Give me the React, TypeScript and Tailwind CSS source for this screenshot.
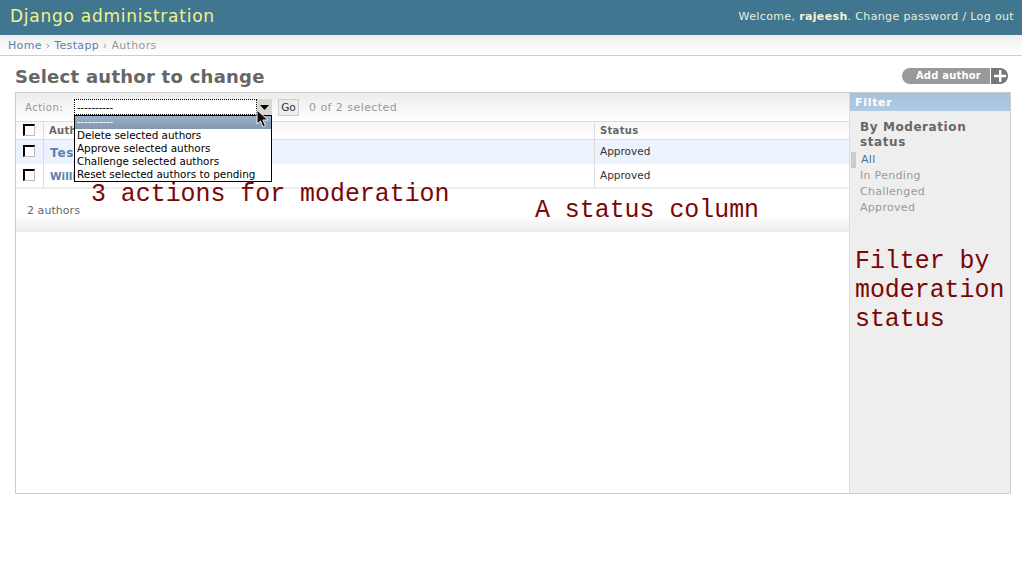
const sans = "font-['DejaVu_Sans',Verdana,sans-serif]"

function Check() {
  return <div className="w-[12px] h-[12px] bg-white border-t-2 border-l-2 border-t-black border-l-black border-r border-b border-r-[#bbb] border-b-[#bbb]" />
}

function Row({ name, className, nameSize }: { name: string; className: string; nameSize: string }) {
  return (
    <div className={`flex ${className}`}>
      <div className="w-[28px] pl-[7px] pt-[5px] border-r border-[#ddd]"><Check /></div>
      <div className={`w-[551px] pl-[6px] pt-[4px] border-r border-[#ddd] font-bold text-[#5b80b2] ${nameSize}`}>{name}</div>
      <div className="flex-1 pl-[5px] pt-[4px] text-[10.5px] text-[#333]">Approved</div>
    </div>
  )
}

function Note({ className, children }: { className: string; children: React.ReactNode }) {
  return <div className={`absolute font-['Liberation_Mono',monospace] text-[#7a0606] text-[24.9px] leading-[29px] whitespace-pre ${className}`}>{children}</div>
}

export default function App() {
  return (
    <div className={`relative w-[1022px] h-[567px] overflow-hidden bg-white text-[#333] ${sans}`}>
      {/* header */}
      <div className="h-[35px] bg-[#417690] flex justify-between items-center pl-[10px] pr-[8px]">
        <div className="text-[17px] tracking-[0.75px] text-[#f1f28a] pb-[2px]">Django administration</div>
        <div className="text-[11px] tracking-[0.36px] text-[#e6f0d8]">
          Welcome, <b className="text-[#f5f5d5]">rajeesh</b>. Change password / Log out
        </div>
      </div>

      {/* breadcrumbs */}
      <div className="h-[21px] pl-[8px] pt-[3px] text-[11px] tracking-[0.34px] text-[#999] border-b border-[#ccc] bg-gradient-to-b from-[#efefef] to-white">
        <span className="text-[#5b80b2]">Home</span> › <span className="text-[#5b80b2]">Testapp</span> › Authors
      </div>

      <div className="pl-[15px] pr-[11px]">
        {/* title row */}
        <div className="flex justify-between items-start h-[36px] pr-[3px]">
          <h1 className="pt-[7px] text-[18px] leading-[28px] font-bold tracking-[0.26px] text-[#666]">Select author to change</h1>
          <div className="flex h-[16px] mt-[12px] items-stretch text-white">
            <div className="w-[88px] rounded-l-full bg-[#999] text-[10px] font-bold tracking-[0.2px] text-right pr-[9px] leading-[15px]">Add author</div>
            <div className="w-[17px] ml-px rounded-r-full bg-[#777] flex items-center justify-center">
              <svg width="12" height="12" viewBox="0 0 12 12"><path d="M5 0h2.400v4.800H12v2.400H7.400V12H5V7.200H0V4.800h5z" fill="#fff" /></svg>
            </div>
          </div>
        </div>

        {/* changelist */}
        <div className="flex h-[402px] border border-[#ccc]">
          <div className="w-[834px] border-r border-[#ddd]">
            <div className="h-[29px] flex items-center border-b border-[#ddd] bg-gradient-to-b from-[#ececec] to-white text-[#999]">
              <span className="ml-[9px] w-[49px] text-[10px] tracking-[0.5px]">Action:</span>
              <div className="w-[183px] h-[16px] bg-white border border-dotted border-black text-black text-[10px] leading-[16px] pl-[2px]">----------</div>
              <div className="w-[15px] h-[17px] bg-[#d8d8d0] flex items-center justify-center">
                <svg width="9" height="5" viewBox="0 0 9 5"><path d="M0 0h9L4.500 5z" fill="#000" /></svg>
              </div>
              <div className="ml-[6px] w-[21px] h-[17px] bg-[#eeeeea] border border-[#ccc] text-[#333] text-[10.5px] leading-[15px] text-center">Go</div>
              <span className="ml-[10px] text-[11px] tracking-[0.45px] pt-[3px]">0 of 2 selected</span>
            </div>
            <div className="flex h-[18px] border-b border-[#ddd] bg-gradient-to-b from-[#f6f6f6] to-white text-[10px] font-bold tracking-[0.3px] text-[#666]">
              <div className="w-[28px] pl-[7px] pt-[2px] border-r border-[#ddd]"><Check /></div>
              <div className="w-[551px] pl-[5px] pt-[1px] border-r border-[#ddd]">Author</div>
              <div className="flex-1 pl-[5px] pt-[1px]">Status</div>
            </div>
            <Row name="Test" className="h-[24px] bg-[#edf3fe]" nameSize="text-[12px] tracking-[0.8px]" />
            <Row name="William" className="h-[23px] bg-white" nameSize="text-[10.5px] leading-[16px]" />
            <div className="h-[45px] border-t-2 border-[#eee] pl-[11px] pt-[14px] text-[11px] tracking-[0.05px] text-[#666] bg-gradient-to-b from-white from-60% to-[#ececec]">2 authors</div>
          </div>

          {/* filter */}
          <div className="flex-1 bg-[#eee]">
            <div className="h-[18px] pt-px bg-gradient-to-b from-[#a5c0de] to-[#b2cbe4] text-white text-[11px] font-bold tracking-[0.7px] pl-[5px] leading-[18px]">Filter</div>
            <h3 className="mt-[9px] ml-[10px] text-[12px] leading-[15px] font-bold tracking-[0.58px] text-[#666]">By Moderation<br />status</h3>
            <ul className="mt-[2px] text-[11px] leading-[16px] tracking-[0.3px] text-[#999]">
              <li className="pl-[5px] ml-px border-l-[5px] border-[#ccc] text-[#4f71a0]">All</li>
              <li className="pl-[10px]">In Pending</li>
              <li className="pl-[10px]">Challenged</li>
              <li className="pl-[10px]">Approved</li>
            </ul>
          </div>
        </div>
      </div>

      {/* open select menu */}
      <div className="absolute left-[74px] top-[115px] w-[198px] h-[67px] bg-white border border-black text-[10.4px] leading-[13px] text-black">
        <div className="h-[13px] bg-gradient-to-b from-[#9ab0c6] to-[#8298b0] text-white text-[10px] pl-[2px] leading-[12px]">----------</div>
        <div className="pl-[2px] whitespace-nowrap">Delete selected authors</div>
        <div className="pl-[2px] whitespace-nowrap">Approve selected authors</div>
        <div className="pl-[2px] whitespace-nowrap">Challenge selected authors</div>
        <div className="pl-[2px] whitespace-nowrap">Reset selected authors to pending</div>
      </div>

      {/* cursor */}
      <svg className="absolute left-[256px] top-[109px]" width="14" height="20" viewBox="0 0 14 20">
        <path d="M1 1v14l3.500-3 2.500 6 2.500-1-2.500-6H12z" fill="#111" stroke="#eee" strokeWidth="1" />
      </svg>

      {/* annotations */}
      <Note className="left-[91px] top-[180px]">3 actions for moderation</Note>
      <Note className="left-[535px] top-[196px]">A status column</Note>
      <Note className="left-[855px] top-[247px]">{"Filter by\nmoderation\nstatus"}</Note>
    </div>
  )
}
